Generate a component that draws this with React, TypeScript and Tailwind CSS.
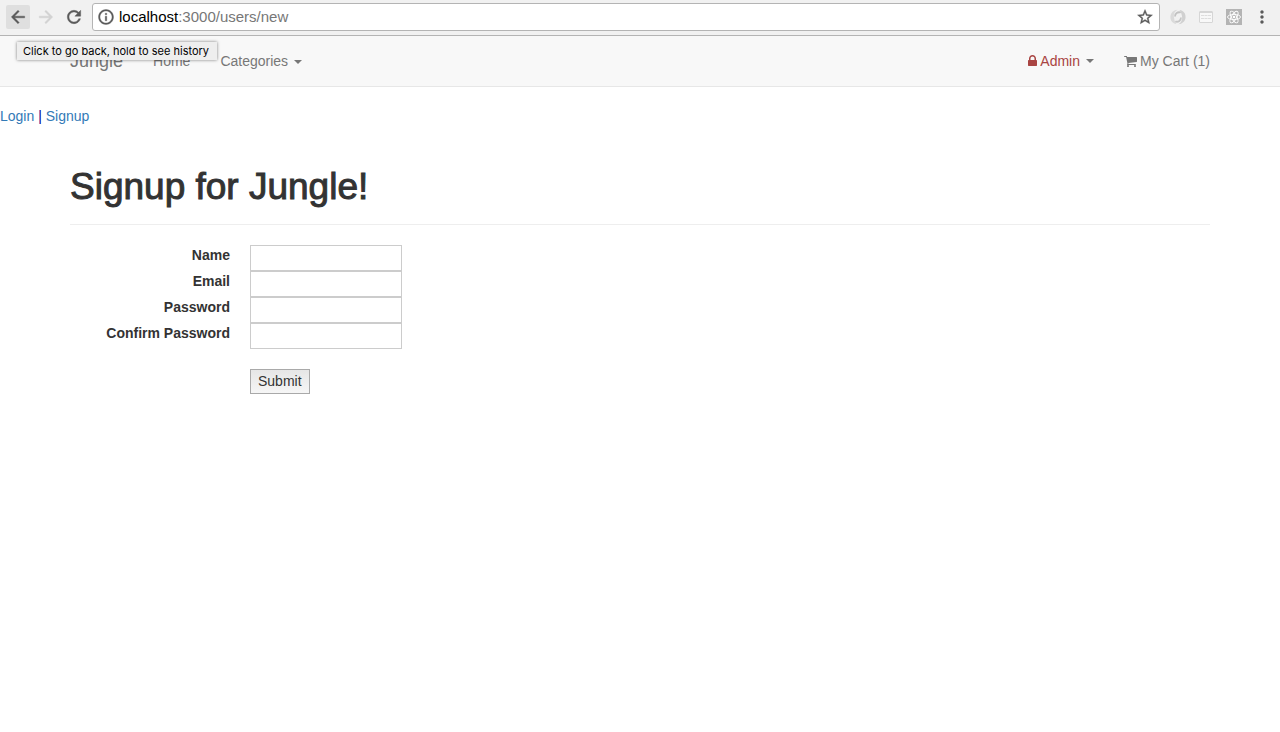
import type { ReactNode } from "react";
import { MdMoreVert } from "react-icons/md";

function Glyph({ path, className }: { path: string; className: string }) {
  return (
    <svg viewBox="0 0 24 24" className={`fill-current stroke-current stroke-[0.5px] ${className}`} aria-hidden="true">
      <path d={path} />
    </svg>
  );
}

const glyphs = {
  back: "M20 11H7.830l5.590-5.590L12 4l-8 8 8 8 1.410-1.410L7.830 13H20v-2z",
  forward: "M12 4l-1.410 1.410L16.170 11H4v2h12.170l-5.580 5.590L12 20l8-8z",
  reload:
    "M17.650 6.350C16.200 4.900 14.210 4 12 4c-4.420 0-7.990 3.580-7.990 8s3.570 8 7.990 8c3.730 0 6.840-2.550 7.730-6h-2.080c-.82 2.330-3.040 4-5.650 4-3.310 0-6-2.690-6-6s2.690-6 6-6c1.660 0 3.140.69 4.220 1.780L13 11h7V4l-2.350 2.350z",
  info:
    "M11 7h2v2h-2zm0 4h2v6h-2zm1-9C6.480 2 2 6.480 2 12s4.480 10 10 10 10-4.480 10-10S17.520 2 12 2zm0 18c-4.410 0-8-3.590-8-8s3.590-8 8-8 8 3.590 8 8-3.590 8-8 8z",
  star:
    "M22 9.240l-7.190-.62L12 2 9.190 8.630 2 9.240l5.460 4.730L5.820 21 12 17.270 18.180 21l-1.630-7.030L22 9.240zM12 15.400l-3.760 2.270 1-4.280-3.320-2.880 4.380-.38L12 6.100l1.710 4.040 4.380.38-3.320 2.880 1 4.280L12 15.400z",
};

function Caret() {
  return (
    <span className="ml-1.5 inline-block border-x-4 border-t-4 border-x-transparent border-t-current align-middle" />
  );
}

function LockIcon() {
  return (
    <svg viewBox="320 0 1152 1792" className="mr-[3px] h-3.5 w-[9px] fill-current" aria-hidden="true">
      <path d="M640 768h512v-192q0-106-75-181t-181-75-181 75-75 181v192zm832 96v576q0 40-28 68t-68 28h-960q-40 0-68-28t-28-68v-576q0-40 28-68t68-28h32v-192q0-184 132-316t316-132 316 132 132 316v192h32q40 0 68 28t28 68z" />
    </svg>
  );
}

function CartIcon() {
  return (
    <svg viewBox="64 0 1664 1792" className="mr-[3px] h-3.5 w-[13px] fill-current" aria-hidden="true">
      <path d="M704 1536q0 52-38 90t-90 38-90-38-38-90 38-90 90-38 90 38 38 90zm896 0q0 52-38 90t-90 38-90-38-38-90 38-90 90-38 90 38 38 90zm128-1088v512q0 24-16.500 42.500t-40.500 21.500l-1044 122q13 60 13 70 0 16-24 64h920q26 0 45 19t19 45-19 45-45 19h-1024q-26 0-45-19t-19-45q0-11 8-31.500t16-36 21.500-40 15.500-29.500l-177-823h-204q-26 0-45-19t-19-45 19-45 45-19h256q16 0 28.500 6.500t19.500 15.500 13 24.500 8 26 5.500 29.500 4.500 26h1201q26 0 45 19t19 45z" />
    </svg>
  );
}

function SwirlIcon() {
  return (
    <svg viewBox="0 0 16 16" className="size-4" fill="none" aria-hidden="true">
      <path d="M6.500 15C2 14.500 0 11 .5 7 1 3.500 4 1 7.500.8 4.500 2.500 3.600 5 3.900 8c.3 3 1.100 5 2.600 7z" fill="#dadada" />
      <path d="M9.500 1c4.500.5 6.500 4 6 8-.5 3.500-3.500 6-7 6.200 3-1.700 3.900-4.200 3.600-7.200-.3-3-1.100-5-2.600-7z" fill="#d0d0d0" />
      <path d="M10.800 3.500C7.500 2.500 5 4.600 5 7.500" stroke="#c2c2c2" strokeWidth="1.800" />
      <path d="M5.200 12.500c3.300 1 5.800-1.100 5.800-4" stroke="#c6c6c6" strokeWidth="1.800" />
    </svg>
  );
}

function PanelIcon() {
  return (
    <svg viewBox="0 0 16 16" className="size-4" fill="none" aria-hidden="true">
      <rect x="1.500" y="2.500" width="13" height="11" rx="0.500" fill="#f8f8f8" stroke="#d6d6d6" />
      <path d="M1 3.500h14" stroke="#d6d6d6" />
      <path d="M3 6.500h10M3 9.500h10" stroke="#dddddd" strokeDasharray="3 0.500" />
    </svg>
  );
}

function AtomIcon() {
  return (
    <svg viewBox="0 0 16 16" className="size-4" aria-hidden="true">
      <rect width="16" height="16" fill="#b4b4b4" />
      <g fill="none" stroke="#fff" strokeWidth="0.900">
        <ellipse cx="8" cy="8" rx="6.500" ry="2.600" />
        <ellipse cx="8" cy="8" rx="6.500" ry="2.600" transform="rotate(60 8 8)" />
        <ellipse cx="8" cy="8" rx="6.500" ry="2.600" transform="rotate(120 8 8)" />
      </g>
      <circle cx="8" cy="8" r="1.300" fill="#fff" />
    </svg>
  );
}

function ToolButton({ label, className = "", children }: { label: string; className?: string; children: ReactNode }) {
  return (
    <button
      type="button"
      aria-label={label}
      className={`flex size-6 shrink-0 items-center justify-center rounded-xs ${className}`}
    >
      {children}
    </button>
  );
}

function BrowserBar() {
  return (
    <div className="relative flex h-9 items-center border-b border-[#b4b4b4] bg-[#f1f1f1] px-1.5 pb-0.5">
      <div className="flex gap-1 text-[#5a5a5a]">
        <ToolButton label="Back" className="bg-[#dfdfdf]">
          <Glyph path={glyphs.back} className="size-5" />
        </ToolButton>
        <ToolButton label="Forward" className="text-[#d2d2d2]">
          <Glyph path={glyphs.forward} className="size-5" />
        </ToolButton>
        <ToolButton label="Reload">
          <Glyph path={glyphs.reload} className="size-5" />
        </ToolButton>
      </div>
      <div className="ml-1.5 flex h-7 flex-1 items-center rounded-[3px] border border-[#b4b4b4] bg-white pr-[5px] pl-1 text-[#5a5a5a]">
        <Glyph path={glyphs.info} className="size-[18px]" />
        <label htmlFor="address" className="relative ml-1 flex-1 text-[15px] leading-5">
          <input id="address" aria-label="Address" className="sr-only" defaultValue="localhost:3000/users/new" />
          <span className="text-black">localhost</span>
          <span className="text-[#777]">:3000/users/new</span>
        </label>
        <button type="button" aria-label="Bookmark this page">
          <Glyph path={glyphs.star} className="size-[18px]" />
        </button>
      </div>
      <div className="ml-1.5 flex gap-1 text-[#5a5a5a]">
        <ToolButton label="Swirl extension">
          <SwirlIcon />
        </ToolButton>
        <ToolButton label="Panel extension">
          <PanelIcon />
        </ToolButton>
        <ToolButton label="React extension">
          <AtomIcon />
        </ToolButton>
        <ToolButton label="Menu">
          <MdMoreVert size={20} />
        </ToolButton>
      </div>
      <div
        role="tooltip"
        className="absolute top-[42px] left-[17px] z-10 bg-[#eee] pr-2 pl-1.5 font-[Inter,sans-serif] text-[11px] leading-[18px] whitespace-nowrap text-black shadow-[0_0_3px_rgba(0,0,0,0.5)]"
      >
        Click to go back, hold to see history
      </div>
    </div>
  );
}

function Navbar() {
  return (
    <nav className="border-b border-[#e7e7e7] bg-[#f8f8f8] text-[#777]">
      <div className="mx-auto flex h-[50px] max-w-[1170px] items-center px-[15px]">
        <a href="#" className="mr-[30px] text-lg leading-5">
          Jungle
        </a>
        <a href="#" className="mr-[30px]">
          Home
        </a>
        <button type="button">
          Categories
          <Caret />
        </button>
        <div className="ml-auto flex items-center gap-[30px]">
          <button type="button" className="flex items-center text-[#a94442]">
            <LockIcon />
            Admin
            <span className="flex text-[#777]">
              <Caret />
            </span>
          </button>
          <a href="#" className="flex items-center">
            <CartIcon />
            My Cart (1)
          </a>
        </div>
      </div>
    </nav>
  );
}

const fields = [
  { id: "name", label: "Name", type: "text" },
  { id: "email", label: "Email", type: "text" },
  { id: "password", label: "Password", type: "password" },
  { id: "password-confirmation", label: "Confirm Password", type: "password" },
];

export default function App() {
  return (
    <div className="bg-white font-['Liberation_Sans',Arial,sans-serif] text-sm leading-5 text-[#333]">
      <BrowserBar />
      <Navbar />
      <div className="mt-[19px] text-[#00008b]">
        <a href="#" className="text-[#337ab7]">
          Login
        </a>{" "}
        |{" "}
        <a href="#" className="text-[#337ab7]">
          Signup
        </a>
      </div>
      <main className="mx-auto max-w-[1170px] px-[15px]">
        <header className="mt-[41px] mb-5 border-b border-[#eee] pb-[17px]">
          <h1 className="text-[37px] leading-10 [-webkit-text-stroke:1px_#333]">Signup for Jungle!</h1>
        </header>
        <form onSubmit={(event) => event.preventDefault()}>
          {fields.map((field) => (
            <div key={field.id} className="flex items-start gap-5">
              <label htmlFor={field.id} className="w-40 text-right font-bold">
                {field.label}
              </label>
              <input
                id={field.id}
                type={field.type}
                className="h-[26px] w-[152px] border border-[#ccc] bg-white px-0.5"
              />
            </div>
          ))}
          <button
            type="submit"
            className="mt-5 ml-[180px] border border-[#a9a9a9] bg-linear-to-b from-[#e6e6e6] to-[#f6f6f6] px-[7px] pt-px pb-0.5"
          >
            Submit
          </button>
        </form>
      </main>
    </div>
  );
}
